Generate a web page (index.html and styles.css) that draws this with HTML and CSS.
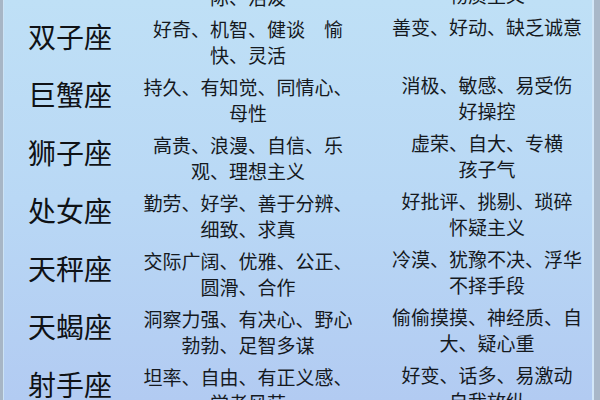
FILE: index.html
```html
<!DOCTYPE html>
<html lang="zh-CN">
<head>
<meta charset="utf-8">
<title>星座性格</title>
<link rel="stylesheet" href="styles.css">
</head>
<body>
<div class="page">
  <div class="table">
    <div class="row">
      <div class="name">金牛座</div>
      <div class="good">稳重、踏实、耐心、实<br>际、活泼</div>
      <div class="bad">固执、贪婪、占有欲强<br>物质主义</div>
    </div>
    <div class="row">
      <div class="name">双子座</div>
      <div class="good">好奇、机智、健谈　愉<br>快、灵活</div>
      <div class="bad">善变、好动、缺乏诚意</div>
    </div>
    <div class="row">
      <div class="name">巨蟹座</div>
      <div class="good">持久、有知觉、同情心、<br>母性</div>
      <div class="bad">消极、敏感、易受伤<br>好操控</div>
    </div>
    <div class="row">
      <div class="name">狮子座</div>
      <div class="good">高贵、浪漫、自信、乐<br>观、理想主义</div>
      <div class="bad">虚荣、自大、专横<br>孩子气</div>
    </div>
    <div class="row">
      <div class="name">处女座</div>
      <div class="good">勤劳、好学、善于分辨、<br>细致、求真</div>
      <div class="bad">好批评、挑剔、琐碎<br>怀疑主义</div>
    </div>
    <div class="row">
      <div class="name">天秤座</div>
      <div class="good">交际广阔、优雅、公正、<br>圆滑、合作</div>
      <div class="bad">冷漠、犹豫不决、浮华<br>不择手段</div>
    </div>
    <div class="row">
      <div class="name">天蝎座</div>
      <div class="good">洞察力强、有决心、野心<br>勃勃、足智多谋</div>
      <div class="bad">偷偷摸摸、神经质、自<br>大、疑心重</div>
    </div>
    <div class="row">
      <div class="name">射手座</div>
      <div class="good">坦率、自由、有正义感、<br>学者风范</div>
      <div class="bad">好变、话多、易激动<br>自我放纵</div>
    </div>
  </div>
</div>
</body>
</html>
```
FILE: styles.css
```css
html, body {
  margin: 0;
  padding: 0;
}
body {
  width: 600px;
  height: 400px;
  overflow: hidden;
  font-family: "Noto Sans CJK SC", "Noto Sans", sans-serif;
  color: #15191e;
}
.page {
  box-sizing: border-box;
  width: 600px;
  height: 400px;
  overflow: hidden;
  background: linear-gradient(180deg, #bfe0f6 0%, #b9d8f5 50%, #b2cbf2 100%);
  border-left: 3px solid #a7b6c6;
  border-right: 6px solid #a9b8c9;
  box-shadow: inset 1px 0 0 #cde3f4, inset -2px 0 0 #d3e7f8;
}
.table {
  display: flex;
  flex-direction: column;
  gap: 6px;
  margin-top: -42px;
}
.row {
  display: grid;
  grid-template-columns: 134px 222px 235px;
  height: 52px;
}
.name {
  font-size: 28px;
  line-height: 40px;
  font-weight: 400;
  text-align: center;
  white-space: nowrap;
  color: #0f1216;
}
.good, .bad {
  font-size: 19px;
  line-height: 26px;
  text-align: center;
  white-space: nowrap;
}
.bad {
  padding-left: 21px;
  margin-top: -2px;
}
```
